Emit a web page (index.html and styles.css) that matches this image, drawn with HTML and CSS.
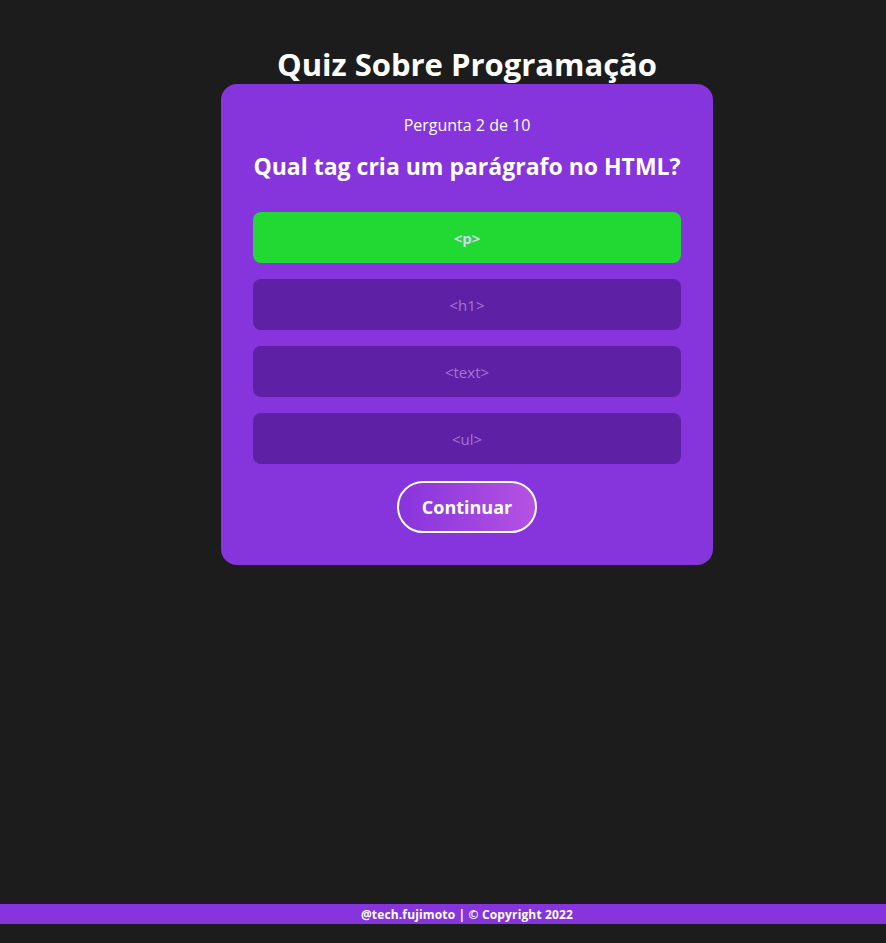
FILE: index.html
```html
<!DOCTYPE html>
<html lang="pt-BR">
<head>
<meta charset="utf-8">
<title>Quiz Sobre Programação</title>
<link rel="stylesheet" href="styles.css">
</head>
<body>
<main class="main">
  <h1 class="title">Quiz Sobre Programação</h1>
  <section class="card">
    <p class="counter">Pergunta 2 de 10</p>
    <h2 class="question">Qual tag cria um parágrafo no HTML?</h2>
    <div class="options">
      <button class="option correct">&lt;p&gt;</button>
      <button class="option">&lt;h1&gt;</button>
      <button class="option">&lt;text&gt;</button>
      <button class="option">&lt;ul&gt;</button>
    </div>
    <button class="next">Continuar</button>
  </section>
</main>
<footer class="footer">@tech.fujimoto | © Copyright 2022</footer>
</body>
</html>
```
FILE: styles.css
```css
* { box-sizing: border-box; }
html, body { height: 100%; }
body {
  margin: 0;
  background: #1c1c1c;
  color: #fff;
  font-family: "Open Sans", "Lato", sans-serif;
  display: flex;
  flex-direction: column;
  min-height: 100vh;
}
.main {
  display: flex;
  flex-direction: column;
  align-items: center;
  padding-left: 48px;
}
.title {
  margin: 44px 0 0;
  font-size: 31px;
  line-height: 40px;
  font-weight: 700;
}
.card {
  width: 492px;
  background: #8634db;
  border-radius: 16px;
  padding: 29px 32px 32px;
  display: flex;
  flex-direction: column;
  align-items: center;
}
.counter {
  margin: 0;
  font-size: 16px;
  line-height: 24px;
}
.question {
  margin: 15px 0 0;
  font-size: 23px;
  line-height: 28px;
  font-weight: 700;
}
.options {
  width: 100%;
  margin-top: 32px;
  display: flex;
  flex-direction: column;
  gap: 16px;
}
.option {
  height: 51px;
  border: none;
  border-radius: 8px;
  background: #5e21a5;
  color: #a274d6;
  font-family: inherit;
  font-size: 15px;
}
.option.correct {
  background: #22d934;
  color: #d6d3ee;
  font-weight: 700;
}
.next {
  margin-top: 17px;
  width: 140px;
  height: 52px;
  border: 2px solid #fff;
  border-radius: 26px;
  background: linear-gradient(90deg, #8834dc, #b552e2);
  color: #fff;
  font-family: inherit;
  font-size: 18px;
  font-weight: 700;
}
.footer {
  margin-top: auto;
  margin-bottom: 19px;
  height: 20px;
  background: #8634db;
  padding: 2px 0 0 48px;
  text-align: center;
  font-size: 12px;
  line-height: 18px;
  font-weight: 700;
  letter-spacing: 0.15px;
}
```
